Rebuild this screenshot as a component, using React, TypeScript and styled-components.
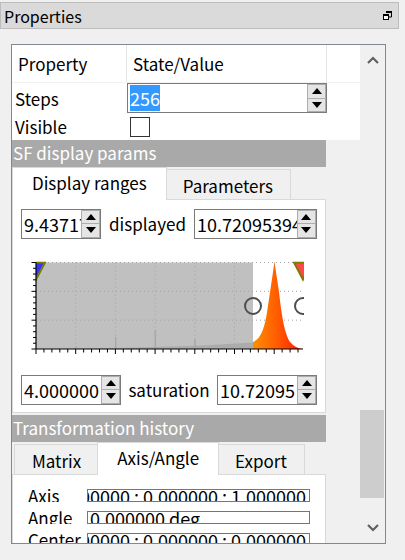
import React from "react";
import styled, { createGlobalStyle } from "styled-components";

const GlobalStyle = createGlobalStyle`
  html, body {
    margin: 0;
    padding: 0;
    background: #f0f0f0;
  }
  body {
    font-family: "Noto Sans CJK JP", "Noto Sans", sans-serif;
    font-size: 17px;
    color: #000;
  }
`;

function ArrowUp() {
  return (
    <svg width="10" height="6" viewBox="0 0 10 6">
      <path d="M0 6 L5 0 L10 6 Z" fill="#000" />
    </svg>
  );
}

function ArrowDown() {
  return (
    <svg width="10" height="6" viewBox="0 0 10 6">
      <path d="M0 0 L10 0 L5 6 Z" fill="#000" />
    </svg>
  );
}

function SpinBox({
  value,
  width,
  selected,
}: {
  value: string;
  width: number;
  selected?: boolean;
}) {
  return (
    <Spin $width={width}>
      <SpinText>{selected ? <Selection>{value}</Selection> : value}</SpinText>
      <SpinButtons>
        <SpinButton>
          <ArrowUp />
        </SpinButton>
        <SpinButton>
          <ArrowDown />
        </SpinButton>
      </SpinButtons>
    </Spin>
  );
}

function HistogramChart() {
  // plot area in svg coords (svg sits at page x=20, y=247)
  const left = 15;
  const right = 282;
  const top = 15.5;
  const bottom = 102;
  const step = 39.7;
  const xMajor: number[] = [];
  const xMinor: number[] = [];
  for (let i = 0; left + (i * step) / 5 <= right + 0.5; i++) {
    const x = left + (i * step) / 5;
    if (i % 5 === 0) xMajor.push(x);
    else xMinor.push(x);
  }
  const yStep = (bottom - top) / 3;
  const yMajor: number[] = [];
  const yMinor: number[] = [];
  for (let i = 0; i <= 15; i++) {
    const y = top + (i * yStep) / 5;
    if (i % 5 === 0) yMajor.push(y);
    else yMinor.push(y);
  }
  const gridX = xMajor.slice(1);
  const gridY = [top, top + yStep, top + 2 * yStep];

  return (
    <ChartSvg width="296" height="119" viewBox="0 0 296 119">
      <defs>
        <clipPath id="plot">
          <rect x={left} y={top - 1} width={right - left + 1} height={bottom - top + 1} />
        </clipPath>
        <linearGradient id="peak" x1="232" y1="0" x2="282" y2="0" gradientUnits="userSpaceOnUse">
          <stop offset="0" stopColor="#ff9000" />
          <stop offset="0.5" stopColor="#ff5a00" />
          <stop offset="1" stopColor="#ff1500" />
        </linearGradient>
      </defs>
      <g clipPath="url(#plot)">
        <rect x={left} y={top} width={232 - left} height={bottom - top} fill="#c0c0c0" />
        {gridY.map((y) => (
          <line key={"gy" + y} x1={left} x2={right} y1={y} y2={y} stroke="#a4a4a4" strokeDasharray="1 3" />
        ))}
        {gridX.map((x) => (
          <line key={"gx" + x} x1={x} x2={x} y1={top} y2={bottom} stroke="#a4a4a4" strokeDasharray="1 3" />
        ))}
        <path d="M50 102 L80 101.5 L130 100 L180 98.5 L232 95.5 L232 102 Z" fill="#acacac" />
        <rect x="54.5" y="99" width="1.2" height="3" fill="#a8a8a8" />
        <rect x="94" y="90" width="1.5" height="12" fill="#a8a8a8" />
        <rect x="133.6" y="83" width="1.5" height="19" fill="#a8a8a8" />
        <rect x="173.3" y="92" width="1.5" height="10" fill="#a8a8a8" />
        <path
          d="M232 95 C240 92, 244 80, 246.5 62 L253.5 15 L258 45 C261 72, 264 87, 269 95 C273 99.5, 277 101.5, 281 102 L232 102 Z"
          fill="url(#peak)"
        />
        <polygon points="6,15.5 24,15.5 15,32.5" fill="#3535ff" stroke="#7c7c00" strokeWidth="2" />
        <polygon points="273,15.5 291,15.5 282,32.5" fill="#ff4848" stroke="#7c7c00" strokeWidth="2" />
        <circle cx="232" cy="59" r="8" fill="none" stroke="#4e4e4e" strokeWidth="2" />
        <circle cx="282" cy="59" r="8" fill="none" stroke="#4e4e4e" strokeWidth="2" />
      </g>
      <line x1={left} x2={left} y1={top} y2={bottom} stroke="#000" strokeWidth="1.2" />
      <line x1={left} x2={right} y1={bottom} y2={bottom} stroke="#000" strokeWidth="1.2" />
      {xMajor.map((x) => (
        <line key={"xM" + x} x1={x} x2={x} y1={bottom} y2={bottom + 5} stroke="#000" />
      ))}
      {xMinor.map((x) => (
        <line key={"xm" + x} x1={x} x2={x} y1={bottom} y2={bottom + 3.5} stroke="#000" />
      ))}
      {yMajor.map((y) => (
        <line key={"yM" + y} x1={left - 4.5} x2={left} y1={y} y2={y} stroke="#000" />
      ))}
      {yMinor.map((y) => (
        <line key={"ym" + y} x1={left - 3} x2={left} y1={y} y2={y} stroke="#000" />
      ))}
    </ChartSvg>
  );
}

export default function App() {
  return (
    <>
      <GlobalStyle />
      <Window>
        <TitleBar>
          <TitleText>Properties</TitleText>
          <svg width="9" height="9" viewBox="0 0 9 9">
            <path d="M3 0.5 H8.5 V6 H6" fill="none" stroke="#000" />
            <rect x="3" y="0" width="6" height="2" fill="#000" />
            <rect x="0.5" y="3.5" width="5" height="5" fill="#fff" stroke="#000" />
            <rect x="0" y="3" width="6" height="2" fill="#000" />
          </svg>
        </TitleBar>
        <ScrollArea>
          <Viewport>
            <PropTable>
              <HeaderRow>
                <HeaderCell>Property</HeaderCell>
                <HeaderCell>State/Value</HeaderCell>
                <div />
              </HeaderRow>
              <BodyRow $height={30}>
                <NameCell>Steps</NameCell>
                <SpinBox value="256" width={200} selected />
                <div />
              </BodyRow>
              <BodyRow $height={27}>
                <NameCell>Visible</NameCell>
                <CheckBox />
                <div />
              </BodyRow>
            </PropTable>

            <SectionBar>SF display params</SectionBar>
            <TabBar>
              <Tab $selected>Display ranges</Tab>
              <Tab>Parameters</Tab>
            </TabBar>
            <RangePane>
              <RangeRow>
                <SpinBox value="9.437170" width={80} />
                <RangeLabel>displayed</RangeLabel>
                <SpinBox value="10.720953940" width={123} />
              </RangeRow>
              <HistogramChart />
              <RangeRow>
                <SpinBox value="4.000000" width={100} />
                <RangeLabel>saturation</RangeLabel>
                <SpinBox value="10.72095" width={100} />
              </RangeRow>
            </RangePane>

            <SectionBar $gap>Transformation history</SectionBar>
            <TabBar>
              <Tab>Matrix</Tab>
              <Tab $selected>Axis/Angle</Tab>
              <Tab>Export</Tab>
            </TabBar>
            <AxisPane>
              <FieldRow>
                <FieldLabel>Axis</FieldLabel>
                <Field $alignEnd>0.000000 : 0.000000 : 1.000000</Field>
              </FieldRow>
              <FieldRow>
                <FieldLabel>Angle</FieldLabel>
                <Field>0.000000 deg</Field>
              </FieldRow>
              <FieldRow>
                <FieldLabel>Center</FieldLabel>
                <Field $alignEnd>0.000000 : 0.000000 : 0.000000</Field>
              </FieldRow>
            </AxisPane>
          </Viewport>
          <ScrollBar>
            <ScrollButton>
              <svg width="12" height="8" viewBox="0 0 12 8">
                <path d="M1 7 L6 2 L11 7" fill="none" stroke="#606060" strokeWidth="2.2" />
              </svg>
            </ScrollButton>
            <ScrollTrack>
              <ScrollThumb $offset={335} $size={88} />
            </ScrollTrack>
            <ScrollButton>
              <svg width="12" height="8" viewBox="0 0 12 8">
                <path d="M1 1 L6 6 L11 1" fill="none" stroke="#606060" strokeWidth="2.2" />
              </svg>
            </ScrollButton>
          </ScrollBar>
        </ScrollArea>
      </Window>
    </>
  );
}

const Window = styled.div`
  width: 405px;
  height: 560px;
  overflow: hidden;
  padding-top: 2px;
  box-sizing: border-box;
  background: #f0f0f0;
`;

const TitleBar = styled.div`
  width: 399px;
  height: 27px;
  box-sizing: border-box;
  border: 1px solid #bcbcbc;
  background: #dadada;
  display: flex;
  align-items: center;
  justify-content: space-between;
  padding: 0 6px 0 3px;
`;

const TitleText = styled.span`
  line-height: 24px;
  font-size: 16px;
`;

const ScrollArea = styled.div`
  margin: 15px 0 0 11px;
  width: 375px;
  height: 500px;
  box-sizing: border-box;
  border: 1px solid #828790;
  display: flex;
  background: #f0f0f0;
`;

const Viewport = styled.div`
  width: 348px;
  overflow: hidden;
  display: flex;
  flex-direction: column;
`;

const PropTable = styled.div`
  background: #fff;
  display: flex;
  flex-direction: column;
`;

const HeaderRow = styled.div`
  display: grid;
  grid-template-columns: 115px 200px 1fr;
  height: 37px;
  border-bottom: 1px solid #f2f2f2;
`;

const HeaderCell = styled.div`
  border-right: 1px solid #e5e5e5;
  padding-left: 6px;
  display: flex;
  align-items: center;
`;

const BodyRow = styled.div<{ $height: number }>`
  display: grid;
  grid-template-columns: 115px 200px 1fr;
  height: ${(p) => p.$height}px;
  align-items: center;
`;

const NameCell = styled.div`
  padding-left: 3px;
`;

const CheckBox = styled.div`
  width: 20px;
  height: 20px;
  box-sizing: border-box;
  border: 1px solid #333;
  background: #fff;
  margin-left: 3px;
`;

const Spin = styled.div<{ $width: number }>`
  width: ${(p) => p.$width}px;
  height: 30px;
  box-sizing: border-box;
  border: 1px solid #7a7a7a;
  background: #fff;
  display: flex;
`;

const SpinText = styled.div`
  flex: 1;
  min-width: 0;
  overflow: hidden;
  white-space: nowrap;
  padding-left: 2px;
  display: flex;
  align-items: center;
  font-size: 18px;
`;

const Selection = styled.span`
  background: #3399ff;
  color: #fff;
  line-height: 26px;
`;

const SpinButtons = styled.div`
  width: 19px;
  display: flex;
  flex-direction: column;
`;

const SpinButton = styled.div`
  flex: 1;
  background: #e5e5e5;
  border: 1px solid #adadad;
  display: flex;
  align-items: center;
  justify-content: center;
  & + & {
    border-top: none;
  }
`;

const SectionBar = styled.div<{ $gap?: boolean }>`
  width: 314px;
  height: 27px;
  margin-top: ${(p) => (p.$gap ? 2 : 0)}px;
  background: #a9a9a9;
  color: #fff;
  line-height: 25px;
  padding-left: 1px;
  box-sizing: border-box;
  flex-shrink: 0;
`;

const TabBar = styled.div`
  width: 314px;
  height: 32px;
  display: flex;
  align-items: flex-end;
  padding-left: 2px;
  box-sizing: border-box;
  flex-shrink: 0;
`;

const Tab = styled.div<{ $selected?: boolean }>`
  position: relative;
  height: ${(p) => (p.$selected ? 33 : 30)}px;
  margin: 0 ${(p) => (p.$selected ? -2 : 0)}px
    ${(p) => (p.$selected ? -1 : 0)}px;
  padding: ${(p) => (p.$selected ? "2px 19px 0" : "3px 17px 0")};
  box-sizing: border-box;
  border: 1px solid #d9d9d9;
  border-bottom: none;
  background: ${(p) => (p.$selected ? "#fff" : "#f0f0f0")};
  z-index: ${(p) => (p.$selected ? 1 : 0)};
  line-height: 26px;
  white-space: nowrap;
`;

const RangePane = styled.div`
  width: 314px;
  box-sizing: border-box;
  border: 1px solid #d9d9d9;
  background: #fff;
  padding: 8px 8px 7px;
  display: flex;
  flex-direction: column;
  gap: 8px;
  flex-shrink: 0;
`;

const RangeRow = styled.div`
  display: flex;
  align-items: center;
  justify-content: space-between;
  height: 31px;
`;

const RangeLabel = styled.span`
  white-space: nowrap;
`;

const ChartSvg = styled.svg`
  display: block;
`;

const AxisPane = styled.div`
  width: 314px;
  box-sizing: border-box;
  border: 1px solid #d9d9d9;
  background: #fff;
  padding: 14px 0 20px 15px;
  display: flex;
  flex-direction: column;
  gap: 9px;
  flex-shrink: 0;
`;

const FieldRow = styled.div`
  display: flex;
  height: 13px;
  overflow: hidden;
`;

const FieldLabel = styled.div`
  width: 59px;
  line-height: 13px;
`;

const Field = styled.div<{ $alignEnd?: boolean }>`
  width: 223px;
  height: 13px;
  box-sizing: border-box;
  border: 1px solid #767676;
  display: flex;
  justify-content: ${(p) => (p.$alignEnd ? "flex-end" : "flex-start")};
  overflow: hidden;
  white-space: nowrap;
  font-size: 18px;
  line-height: 12px;
  padding: 0 3px 0 2px;
`;

const ScrollBar = styled.div`
  width: 25px;
  display: flex;
  flex-direction: column;
  background: #f0f0f0;
`;

const ScrollButton = styled.div`
  height: 30px;
  display: flex;
  align-items: center;
  justify-content: center;
  flex-shrink: 0;
`;

const ScrollTrack = styled.div`
  flex: 1;
  display: flex;
  flex-direction: column;
`;

const ScrollThumb = styled.div<{ $offset: number; $size: number }>`
  margin-top: ${(p) => p.$offset}px;
  height: ${(p) => p.$size}px;
  width: 24px;
  background: #cdcdcd;
`;
